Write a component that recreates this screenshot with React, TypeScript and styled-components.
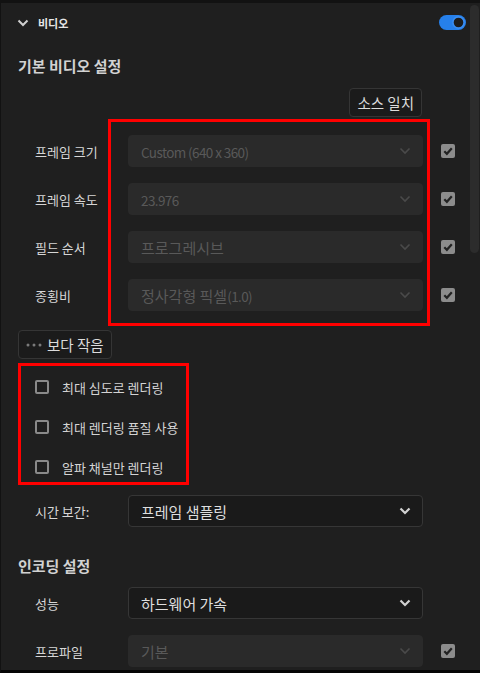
import React from "react";
import styled, { createGlobalStyle } from "styled-components";

const Global = createGlobalStyle`
  html, body {
    margin: 0;
    padding: 0;
    background: #1f1f1f;
  }
  body {
    font-family: "Noto Sans CJK KR", "Noto Sans", sans-serif;
    color: #d4d4d4;
  }
`;

const Frame = styled.div`
  box-sizing: border-box;
  width: 480px;
  height: 673px;
  overflow: hidden;
  display: flex;
  background: #1f1f1f;
  border-top: 3px solid #121212;
  border-left: 1px solid #121212;
  border-bottom: 3px solid #050505;
`;

const Content = styled.div`
  flex: 1;
  display: flex;
  flex-direction: column;
`;

const ScrollTrack = styled.div`
  width: 10px;
  padding-top: 2px;
`;

const ScrollThumb = styled.div`
  width: 9px;
  height: 248px;
  border-radius: 5px;
  background: #2c2c2c;
`;

const Header = styled.div`
  height: 39px;
  display: flex;
  align-items: center;
  padding: 0 4px 0 16px;
`;

const HeaderTitle = styled.span`
  flex: 1;
  margin-left: 9px;
  font-size: 11px;
  font-weight: 700;
  color: #e6e6e6;
`;

const SectionTitle = styled.div<{ $top: number }>`
  margin: ${(p) => p.$top}px 0 0 17px;
  height: 20px;
  line-height: 20px;
  font-size: 15px;
  font-weight: 700;
  color: #d2d2d2;
`;

const ButtonRow = styled.div`
  margin-top: 12px;
  display: flex;
  justify-content: flex-end;
  padding-right: 48px;
`;

const Button = styled.button<{ $left?: number }>`
  box-sizing: border-box;
  height: 29px;
  margin-left: ${(p) => p.$left || 0}px;
  padding: 0 7px;
  display: flex;
  align-items: center;
  gap: 5px;
  background: #1b1b1b;
  border: 1px solid #353535;
  border-radius: 4px;
  font-family: inherit;
  font-size: 14.5px;
  color: #dcdcdc;
`;

const LessRow = styled.div`
  margin-top: 19px;
  display: flex;
`;

const FieldGroup = styled.div`
  position: relative;
  margin-top: 18px;
  display: flex;
  flex-direction: column;
  gap: 16px;
`;

const Annotation = styled.div`
  position: absolute;
  left: 107px;
  top: -16px;
  width: 322px;
  bottom: -15px;
  box-sizing: border-box;
  border: 3px solid #ff0000;
  pointer-events: none;
`;

const FieldRow = styled.div<{ $top?: number }>`
  margin-top: ${(p) => p.$top || 0}px;
  display: flex;
  align-items: center;
  padding-left: 34px;
  height: 32px;
`;

const Label = styled.span`
  width: 93px;
  font-size: 13px;
  color: #d6d6d6;
`;

const Select = styled.div<{ $disabled?: boolean }>`
  box-sizing: border-box;
  width: 295px;
  height: 32px;
  display: flex;
  align-items: center;
  justify-content: space-between;
  padding: 0 11px 0 12px;
  border-radius: 4px;
  background: ${(p) => (p.$disabled ? "#2a2a2a" : "#1a1a1a")};
  border: 1px solid ${(p) => (p.$disabled ? "#2a2a2a" : "#363636")};
  font-size: 15px;
  color: ${(p) => (p.$disabled ? "#595959" : "#dedede")};
`;

const Latin = styled.span`
  font-size: 13.5px;
  letter-spacing: -0.6px;
`;

const CheckBox = styled.span<{ $checked?: boolean }>`
  box-sizing: border-box;
  width: 14px;
  height: 14px;
  border-radius: 2px;
  display: flex;
  align-items: center;
  justify-content: center;
  flex-shrink: 0;
  background: ${(p) => (p.$checked ? "#8c8c8c" : "transparent")};
  border: ${(p) => (p.$checked ? "none" : "2px solid #8a8a8a")};
`;

const TailCheck = styled.div`
  margin-left: 18px;
  display: flex;
`;

const CheckGroup = styled.div`
  margin: 4px 0 0 17px;
  width: 171px;
  height: 122px;
  box-sizing: border-box;
  border: 3px solid #ff0000;
  padding: 1px 0 0 14px;
  display: grid;
  grid-auto-rows: 40px;
`;

const CheckRow = styled.div`
  display: flex;
  align-items: center;
  gap: 13px;
  font-size: 13px;
  color: #d4d4d4;
  white-space: nowrap;
`;

const Chevron = ({ color, width = 1.6 }: { color: string; width?: number }) => (
  <svg width="12" height="8" viewBox="0 0 12 8">
    <path d="M1.5 1.5 L6 6 L10.5 1.5" fill="none" stroke={color} strokeWidth={width} />
  </svg>
);

const Tick = () => (
  <svg width="14" height="14" viewBox="0 0 14 14">
    <path d="M3.3 7.2 L5.9 9.8 L10.8 4.3" fill="none" stroke="#222" strokeWidth="2.2" />
  </svg>
);

const Toggle = () => (
  <svg width="27" height="15" viewBox="0 0 27 15">
    <rect x="0" y="0" width="27" height="15" rx="7.5" fill="#2680eb" />
    <circle cx="19.5" cy="7.5" r="5.6" fill="#1d1d1d" stroke="#3b8ef2" strokeWidth="1.6" />
  </svg>
);

const Dots = () => (
  <svg width="16" height="4" viewBox="0 0 16 4">
    <circle cx="2" cy="2" r="1.5" fill="#7a7a7a" />
    <circle cx="8" cy="2" r="1.5" fill="#7a7a7a" />
    <circle cx="14" cy="2" r="1.5" fill="#7a7a7a" />
  </svg>
);

// hangul runs keep the select size, latin runs get the narrower face
const Value = ({ text }: { text: string }) => (
  <span>
    {text.split(/([\uAC00-\uD7A3 ]+)/).filter(Boolean).map((part, i) =>
      /[\uAC00-\uD7A3]/.test(part) ? <span key={i}>{part}</span> : <Latin key={i}>{part}</Latin>
    )}
  </span>
);

const fields = [
  { label: "프레임 크기", value: "Custom (640 x 360)" },
  { label: "프레임 속도", value: "23.976" },
  { label: "필드 순서", value: "프로그레시브" },
  { label: "종횡비", value: "정사각형 픽셀(1.0)" },
];

const renderOptions = ["최대 심도로 렌더링", "최대 렌더링 품질 사용", "알파 채널만 렌더링"];

export default function App() {
  return (
    <>
      <Global />
      <Frame>
        <Content>
          <Header>
            <Chevron color="#cfcfcf" width={2} />
            <HeaderTitle>비디오</HeaderTitle>
            <Toggle />
          </Header>

          <SectionTitle $top={14}>기본 비디오 설정</SectionTitle>

          <ButtonRow>
            <Button>소스 일치</Button>
          </ButtonRow>

          <FieldGroup>
            {fields.map((f) => (
              <FieldRow key={f.label}>
                <Label>{f.label}</Label>
                <Select $disabled>
                  <Value text={f.value} />
                  <Chevron color="#4a4a4a" />
                </Select>
                <TailCheck>
                  <CheckBox $checked>
                    <Tick />
                  </CheckBox>
                </TailCheck>
              </FieldRow>
            ))}
            <Annotation />
          </FieldGroup>

          <LessRow>
            <Button $left={17}>
              <Dots />
              보다 작음
            </Button>
          </LessRow>

          <CheckGroup>
            {renderOptions.map((o) => (
              <CheckRow key={o}>
                <CheckBox />
                {o}
              </CheckRow>
            ))}
          </CheckGroup>

          <FieldRow $top={10}>
            <Label>시간 보간:</Label>
            <Select>
              <span>프레임 샘플링</span>
              <Chevron color="#d2d2d2" width={2.2} />
            </Select>
          </FieldRow>

          <SectionTitle $top={29}>인코딩 설정</SectionTitle>

          <FieldRow $top={11}>
            <Label>성능</Label>
            <Select>
              <span>하드웨어 가속</span>
              <Chevron color="#d2d2d2" width={2.2} />
            </Select>
          </FieldRow>

          <FieldRow $top={16}>
            <Label>프로파일</Label>
            <Select $disabled>
              <span>기본</span>
              <Chevron color="#4a4a4a" />
            </Select>
            <TailCheck>
              <CheckBox $checked>
                <Tick />
              </CheckBox>
            </TailCheck>
          </FieldRow>
        </Content>
        <ScrollTrack>
          <ScrollThumb />
        </ScrollTrack>
      </Frame>
    </>
  );
}
